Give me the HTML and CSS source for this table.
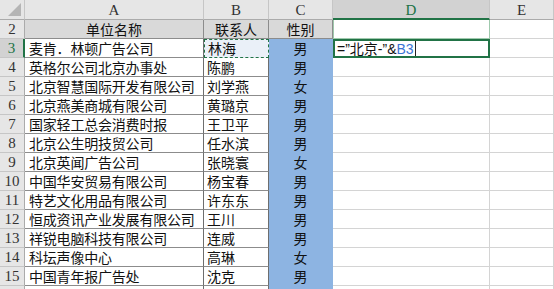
FILE: index.html
```html
<!DOCTYPE html>
<html>
<head>
<meta charset="utf-8">
<link rel="stylesheet" href="styles.css">
</head>
<body>
<div class="sheet">
  <div class="corner"><span class="tri"></span></div>
  <div class="colh">A</div>
  <div class="colh">B</div>
  <div class="colh">C</div>
  <div class="colh act">D</div>
  <div class="colh">E</div>

  <div class="rowh">2</div>
  <div class="c hd">单位名称</div>
  <div class="c hd">联系人</div>
  <div class="c hd">性别</div>
  <div class="c d2"></div>
  <div class="c e"></div>

  <div class="rowh act">3</div>
  <div class="c a">麦肯．林顿广告公司</div>
  <div class="c b ref">林海</div>
  <div class="c g">男</div>
  <div class="c d3">=”北京-”&amp;<span class="blue">B3</span><span class="caret"></span></div>
  <div class="c e"></div>

  <div class="rowh">4</div><div class="c a">英格尔公司北京办事处</div><div class="c b">陈鹏</div><div class="c g">男</div><div class="c e"></div><div class="c e"></div>
  <div class="rowh">5</div><div class="c a">北京智慧国际开发有限公司</div><div class="c b">刘学燕</div><div class="c g">女</div><div class="c e"></div><div class="c e"></div>
  <div class="rowh">6</div><div class="c a">北京燕美商城有限公司</div><div class="c b">黄璐京</div><div class="c g">男</div><div class="c e"></div><div class="c e"></div>
  <div class="rowh">7</div><div class="c a">国家轻工总会消费时报</div><div class="c b">王卫平</div><div class="c g">男</div><div class="c e"></div><div class="c e"></div>
  <div class="rowh">8</div><div class="c a">北京公生明技贸公司</div><div class="c b">任水滨</div><div class="c g">男</div><div class="c e"></div><div class="c e"></div>
  <div class="rowh">9</div><div class="c a">北京英闻广告公司</div><div class="c b">张晓寰</div><div class="c g">女</div><div class="c e"></div><div class="c e"></div>
  <div class="rowh">10</div><div class="c a">中国华安贸易有限公司</div><div class="c b">杨宝春</div><div class="c g">男</div><div class="c e"></div><div class="c e"></div>
  <div class="rowh">11</div><div class="c a">特艺文化用品有限公司</div><div class="c b">许东东</div><div class="c g">男</div><div class="c e"></div><div class="c e"></div>
  <div class="rowh">12</div><div class="c a">恒成资讯产业发展有限公司</div><div class="c b">王川</div><div class="c g">男</div><div class="c e"></div><div class="c e"></div>
  <div class="rowh">13</div><div class="c a">祥锐电脑科技有限公司</div><div class="c b">连威</div><div class="c g">男</div><div class="c e"></div><div class="c e"></div>
  <div class="rowh">14</div><div class="c a">科坛声像中心</div><div class="c b">高琳</div><div class="c g">女</div><div class="c e"></div><div class="c e"></div>
  <div class="rowh">15</div><div class="c a">中国青年报广告处</div><div class="c b">沈克</div><div class="c g">男</div><div class="c e"></div><div class="c e"></div>
  <div class="rowh"></div><div class="c a"></div><div class="c b"></div><div class="c g"></div><div class="c e"></div><div class="c e"></div>
</div>
</body>
</html>
```
FILE: styles.css
```css
html, body {
  margin: 0;
  padding: 0;
  background: #ffffff;
  overflow: hidden;
}
.sheet {
  display: grid;
  grid-template-columns: 25px 179px 65px 64px 157px 64px;
  grid-template-rows: 20px repeat(15, 19px);
  width: 554px;
  font-family: "Noto Sans CJK SC", sans-serif;
  font-size: 14px;
  color: #111;
}
.sheet > div {
  box-sizing: border-box;
  border-right: 1px solid #d4d4d4;
  border-bottom: 1px solid #d4d4d4;
  line-height: 18px;
  white-space: nowrap;
  overflow: hidden;
}
.corner {
  background: #e6e6e6;
  position: relative;
  border-right-color: #c6c6c6 !important;
  border-bottom-color: #ababab !important;
}
.tri {
  position: absolute;
  right: 3px;
  bottom: 3px;
  width: 0;
  height: 0;
  border-left: 13px solid transparent;
  border-bottom: 13px solid #b5b5b5;
}
.colh {
  background: #e6e6e6;
  text-align: center;
  font-family: "Liberation Serif", serif;
  font-size: 15px;
  line-height: 20px !important;
  color: #333;
  border-right-color: #c6c6c6 !important;
  border-bottom-color: #ababab !important;
}
.colh.act {
  background: #d2d2d2;
  color: #217346;
  border-bottom: 2px solid #217346 !important;
}
.rowh {
  background: #e6e6e6;
  text-align: center;
  font-family: "Liberation Serif", serif;
  font-size: 15px;
  color: #333;
  border-right-color: #ababab !important;
  border-bottom-color: #c6c6c6 !important;
}
.rowh.act {
  background: #d2d2d2;
  color: #217346;
  border-right: 2px solid #217346 !important;
}
.c.hd {
  background: #d9d9d9;
  text-align: center;
  border-right-color: #8c8c8c;
  border-bottom-color: #8c8c8c;
}
.c.a {
  padding-left: 4px;
  letter-spacing: -0.2px;
  border-right-color: #6e6e6e;
  border-bottom-color: #8c8c8c;
}
.c.b {
  padding-left: 3px;
  border-right-color: #6e6e6e;
  border-bottom-color: #8c8c8c;
}
.c.b.ref {
  background: #eaf0f8;
  border: 1px dashed #217346;
  line-height: 17px;
}
.c.g {
  background: #8db4e2;
  text-align: center;
  border-right-color: #8db4e2;
  border-bottom-color: #8db4e2;
}
.c.d2 {
  border: 1px solid #9fc9ad;
  border-top: none;
}
.c.d3 {
  border: 2px solid #217346;
  padding-left: 2px;
  line-height: 15px;
  font-family: "Liberation Sans", "Noto Sans CJK SC", sans-serif;
}
.blue {
  color: #3a74d4;
}
.caret {
  display: inline-block;
  width: 1px;
  height: 16px;
  background: #222;
  vertical-align: -3px;
  margin-left: 1px;
}
```
